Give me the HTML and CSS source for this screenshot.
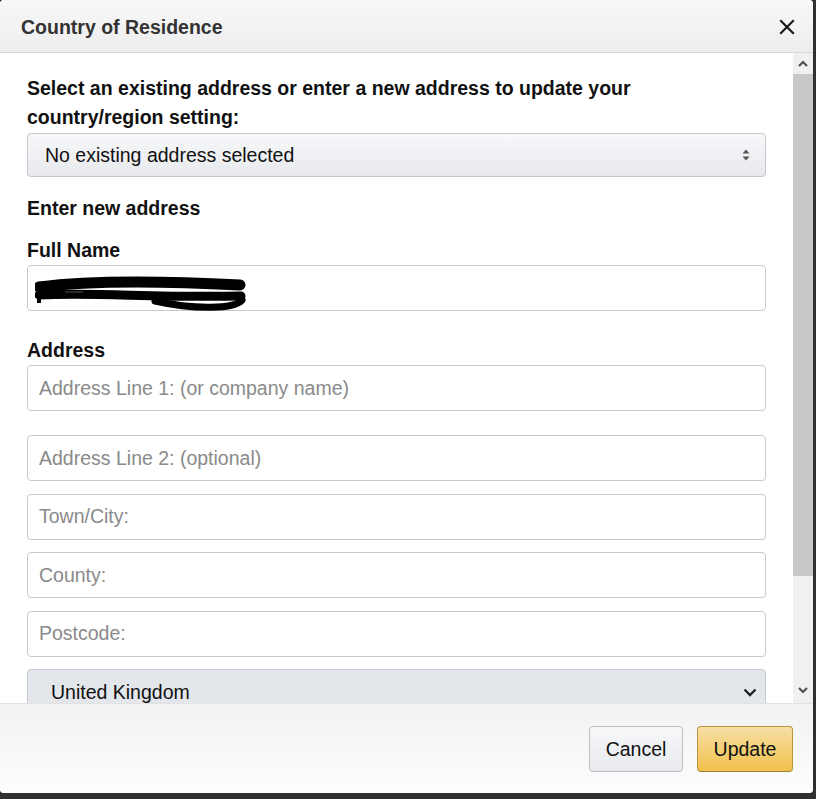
FILE: index.html
```html
<!DOCTYPE html>
<html lang="en">
<head>
<meta charset="utf-8">
<title>Country of Residence</title>
<link rel="stylesheet" href="styles.css">
</head>
<body>
<div class="modal">
  <header class="hdr">
    <h4 class="title">Country of Residence</h4>
    <button class="close" aria-label="Close">
      <svg width="16" height="16" viewBox="0 0 16 16"><path d="M2 2 L14 14 M14 2 L2 14" stroke="#1a1a1a" stroke-width="2.2" stroke-linecap="square"/></svg>
    </button>
  </header>
  <div class="main">
    <div class="content">
      <p class="intro">Select an existing address or enter a new address to update your country/region setting:</p>
      <div class="select sel-address">
        <span>No existing address selected</span>
        <svg class="updown" width="8" height="12" viewBox="0 0 8 12"><path d="M4 0.5 L7.5 4.5 L0.5 4.5 Z M4 11.5 L7.5 7.5 L0.5 7.5 Z" fill="#555"/></svg>
      </div>
      <h5 class="subhead">Enter new address</h5>
      <label class="lbl">Full Name</label>
      <div class="field redacted">
        <svg width="212" height="36" viewBox="0 0 212 36">
          <path d="M4 11 C 50 5, 110 4, 205 9" stroke="#000" stroke-width="11" fill="none" stroke-linecap="round"/>
          <path d="M4 19 C 60 16, 120 22, 206 20" stroke="#000" stroke-width="9" fill="none" stroke-linecap="round"/>
          <path d="M120 25 C 160 34, 200 33, 207 24" stroke="#000" stroke-width="7" fill="none" stroke-linecap="round"/>
          <path d="M4 20 L4 27" stroke="#000" stroke-width="4"/>
          <path d="M30 16 L48 16" stroke="#555" stroke-width="1"/>
        </svg>
      </div>
      <label class="lbl lbl-address">Address</label>
      <input class="field f-gap-lg" type="text" placeholder="Address Line 1: (or company name)">
      <input class="field" type="text" placeholder="Address Line 2: (optional)">
      <input class="field" type="text" placeholder="Town/City:">
      <input class="field" type="text" placeholder="County:">
      <input class="field" type="text" placeholder="Postcode:">
      <div class="select sel-country">
        <span>United Kingdom</span>
        <svg width="14" height="9" viewBox="0 0 14 9"><path d="M1.5 1.5 L7 7 L12.5 1.5" stroke="#222" stroke-width="2.4" fill="none"/></svg>
      </div>
    </div>
    <div class="scrollbar">
      <div class="sb-btn sb-up"><svg width="10" height="7" viewBox="0 0 10 7"><path d="M1 6 L5 2 L9 6" stroke="#505050" stroke-width="2.2" fill="none"/></svg></div>
      <div class="sb-track"><div class="sb-thumb"></div></div>
      <div class="sb-btn sb-down"><svg width="10" height="7" viewBox="0 0 10 7"><path d="M1 1 L5 5 L9 1" stroke="#505050" stroke-width="2.2" fill="none"/></svg></div>
    </div>
  </div>
  <footer class="ftr">
    <button class="btn btn-cancel">Cancel</button>
    <button class="btn btn-update">Update</button>
  </footer>
</div>
</body>
</html>
```
FILE: styles.css
```css
html, body {
  margin: 0;
  padding: 0;
}
body {
  background: #303030;
  font-family: "Liberation Sans", Arial, sans-serif;
  width: 816px;
  height: 799px;
  overflow: hidden;
}
.modal {
  width: 813px;
  height: 793px;
  background: #fff;
  border-radius: 4px;
  overflow: hidden;
  display: flex;
  flex-direction: column;
}
.hdr {
  flex: none;
  box-sizing: border-box;
  height: 53px;
  border-bottom: 1px solid #d6d6d6;
  background: linear-gradient(#f8f8f8, #ededed);
  display: flex;
  align-items: center;
  justify-content: space-between;
  padding: 2px 18px 0 21px;
}
.title {
  margin: 0;
  font-size: 19.5px;
  font-weight: 700;
  color: #333;
}
.close {
  border: 0;
  background: none;
  padding: 0;
  width: 16px;
  height: 16px;
  display: flex;
}
.main {
  flex: 1;
  min-height: 0;
  display: flex;
}
.content {
  flex: 1;
  overflow: hidden;
  padding: 21px 27px 0;
  color: #111;
}
.intro {
  margin: 0 0 2px;
  font-size: 19.5px;
  line-height: 28.5px;
  font-weight: 700;
}
.select {
  box-sizing: border-box;
  height: 44px;
  border: 1px solid #c3c6cb;
  border-radius: 4px;
  background: linear-gradient(#f7f8fa, #e7e9ec);
  display: flex;
  align-items: center;
  justify-content: space-between;
  font-size: 19.5px;
  color: #111;
}
.sel-address {
  padding: 0 15px 0 17px;
}
.subhead {
  margin: 17px 0 13px;
  font-size: 19.5px;
  line-height: 29px;
  font-weight: 700;
}
.lbl {
  display: block;
  font-size: 19.5px;
  line-height: 29px;
  font-weight: 700;
}
.lbl-address {
  margin-top: 25px;
}
.field {
  display: block;
  box-sizing: border-box;
  width: 100%;
  height: 46px;
  margin: 0 0 12.5px;
  border: 1px solid #c9c9c9;
  border-radius: 4px;
  padding: 0 11px;
  font-family: "Liberation Sans", Arial, sans-serif;
  font-size: 19.5px;
  color: #111;
  background: #fff;
  outline: none;
}
.field::placeholder {
  color: #8a8a8a;
}
.f-gap-lg {
  margin-bottom: 24px;
}
.redacted {
  margin: 0;
  padding: 10px 0 0 7px;
}
.redacted svg {
  display: block;
}
.sel-country {
  height: 46px;
  margin-top: 0.5px;
  padding: 0 8px 0 23px;
  background: #e3e6ea;
  border-color: #c6c9ce;
}
.scrollbar {
  flex: none;
  width: 20px;
  background: #f0f0f0;
  display: flex;
  flex-direction: column;
}
.sb-btn {
  flex: none;
  height: 20px;
  display: flex;
  align-items: center;
  justify-content: center;
}
.sb-down {
  height: 20px;
  margin-bottom: 3px;
}
.sb-track {
  flex: 1;
  padding-top: 1px;
}
.sb-thumb {
  height: 502px;
  background: #c8c8c8;
}
.ftr {
  flex: none;
  box-sizing: border-box;
  height: 90px;
  border-top: 1px solid #e2e2e2;
  background: linear-gradient(#f2f2f2, #fdfdfd);
  display: flex;
  justify-content: flex-end;
  align-items: flex-start;
  gap: 14px;
  padding: 22px 20px 0 0;
}
.btn {
  box-sizing: border-box;
  height: 46px;
  padding: 0;
  border-radius: 4px;
  font-family: "Liberation Sans", Arial, sans-serif;
  font-size: 19.5px;
  color: #111;
  cursor: pointer;
}
.btn-cancel {
  width: 94px;
  border: 1px solid #bcc0c6;
  background: linear-gradient(#f7f8fa, #e7e9ec);
}
.btn-update {
  width: 96px;
  border: 1px solid #b8963c;
  border-bottom-color: #9c7e31;
  background: linear-gradient(#f7dfa5, #f0c14b);
}
```
